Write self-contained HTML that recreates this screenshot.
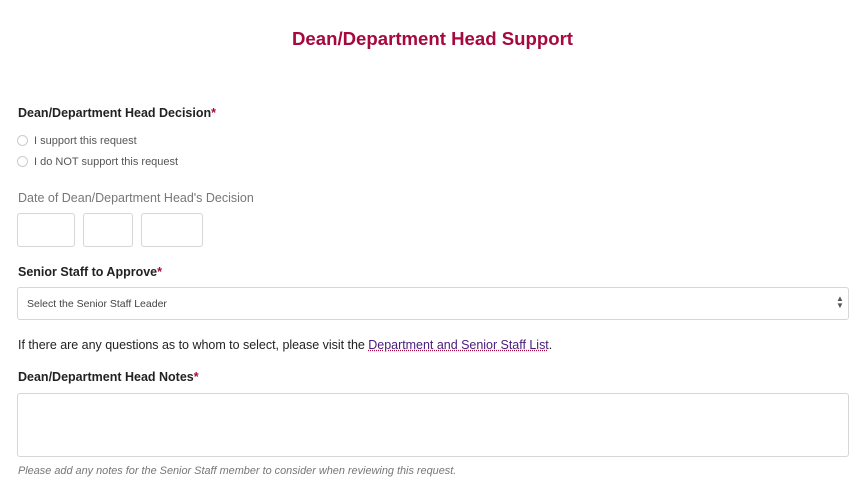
<!DOCTYPE html>
<html><head><style>
body{margin:0;background:#fff;font-family:"Liberation Sans",sans-serif;width:865px;height:495px;position:relative;overflow:hidden;color:#222}
.a{position:absolute;white-space:nowrap}
h1{position:absolute;top:28px;left:0;width:865px;text-align:center;margin:0;font-size:18.6px;color:#a6093d;font-weight:bold}
.lbl{font-weight:bold;font-size:12.5px;color:#222}
.req{color:#a6093d}
.rad{font-size:11px;color:#555}
.rad span{display:inline-block;width:9px;height:9px;border:1px solid #ccc;border-radius:50%;vertical-align:-2px;margin-right:6px}
.box{position:absolute;border:1px solid #d6d6d6;border-radius:3px;background:#fff}
</style></head><body>
<h1>Dean/Department Head Support</h1>
<div class="a lbl" style="left:18px;top:106px">Dean/Department Head Decision<span class="req">*</span></div>
<div class="a rad" style="left:17px;top:135px"><span></span>I support this request</div>
<div class="a rad" style="left:17px;top:156px"><span></span>I do NOT support this request</div>
<div class="a" style="left:18px;top:191px;font-size:12.5px;color:#777">Date of Dean/Department Head's Decision</div>
<div class="box" style="left:17px;top:213px;width:56px;height:32px"></div>
<div class="box" style="left:83px;top:213px;width:48px;height:32px"></div>
<div class="box" style="left:141px;top:213px;width:60px;height:32px"></div>
<div class="a lbl" style="left:18px;top:265px">Senior Staff to Approve<span class="req">*</span></div>
<div class="box" style="left:17px;top:287px;width:830px;height:31px"></div>
<div class="a" style="left:27px;top:298px;font-size:10.5px;color:#444">Select the Senior Staff Leader</div>
<div class="a" style="left:836px;top:295px;font-size:8px;color:#555;line-height:7px">▲<br>▼</div>
<div class="a" style="left:18px;top:338px;font-size:12.5px;color:#222;letter-spacing:-0.02px">If there are any questions as to whom to select, please visit the <span style="color:#4b1a7a;text-decoration:underline dotted #a6093d">Department and Senior Staff List</span>.</div>
<div class="a lbl" style="left:18px;top:370px">Dean/Department Head Notes<span class="req">*</span></div>
<div class="box" style="left:17px;top:393px;width:830px;height:62px"></div>
<div class="a" style="left:18px;top:465px;font-size:10.9px;color:#777;font-style:italic">Please add any notes for the Senior Staff member to consider when reviewing this request.</div>
</body></html>
